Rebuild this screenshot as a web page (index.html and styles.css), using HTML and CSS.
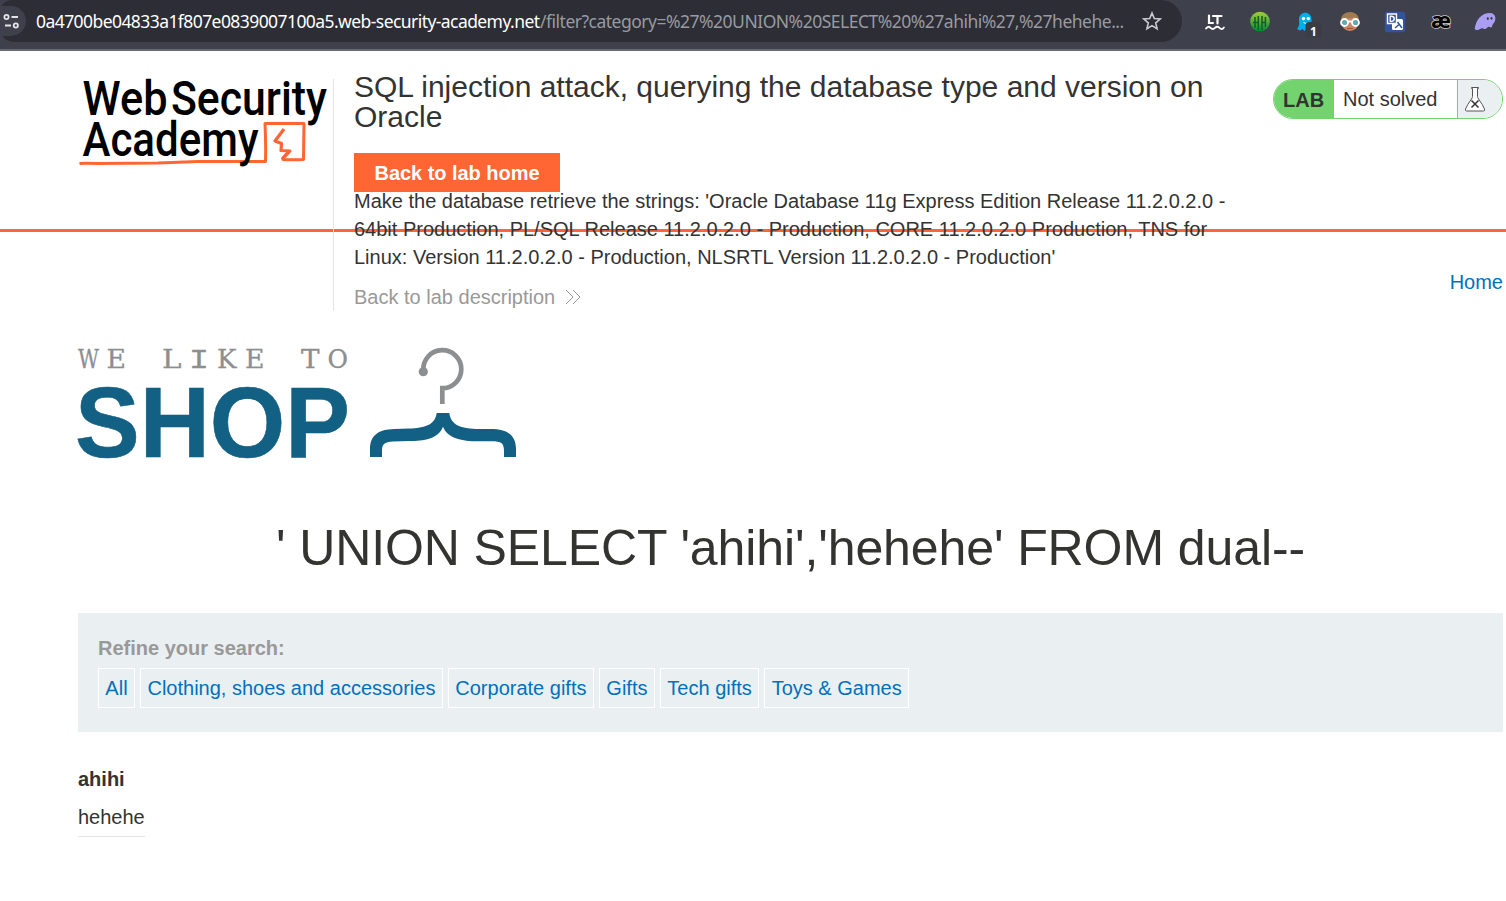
FILE: index.html
```html
<!DOCTYPE html>
<html lang="en">
<head>
<meta charset="utf-8">
<title>SQL injection attack, querying the database type and version on Oracle</title>
<link rel="stylesheet" href="styles.css">
</head>
<body>
<div class="browser-bar">
  <div class="address">
    <span class="site-info">
      <svg width="26" height="30" viewBox="0 0 26 30" fill="none" stroke="#e3e3e8" stroke-width="1.8"><circle cx="6.500" cy="11" r="2.100"/><path d="M11.500 11h6.500M5 19.500h6"/><circle cx="15.800" cy="19.500" r="2.100"/></svg>
    </span>
    <span class="url"><span class="host">0a4700be04833a1f807e0839007100a5.web-security-academy.net</span><span class="path">/filter?category=%27%20UNION%20SELECT%20%27ahihi%27,%27hehehe...</span></span>
    <svg class="star" width="20" height="20" viewBox="0 0 20 20" fill="none" stroke="#c9cad0" stroke-width="1.600"><path d="M10 2l2.300 5.500 5.900.5-4.500 3.900 1.400 5.800L10 14.600l-5.100 3.100 1.400-5.800L1.800 8l5.900-.5z"/></svg>
  </div>
  <div class="extensions">
    <svg width="22" height="22" viewBox="0 0 22 22" fill="none" stroke="#fff" stroke-width="2.200" stroke-linecap="round"><path d="M5 4.500v7.500h4M9 5h8.500M13.500 5v7.500"/><path d="M2 17.500c1.800-2.200 2.800-2.200 4.500-.6s2.700 1.700 4.500 0 2.800-1.700 4.500 0 2.800 1.700 4.400-.4" stroke-width="1.800"/></svg>
    <svg width="22" height="22" viewBox="0 0 22 22"><defs><linearGradient id="g" x2="0" y2="1"><stop stop-color="#a5cf3a"/><stop offset="1" stop-color="#008c35"/></linearGradient></defs><circle cx="11" cy="10.500" r="9.800" fill="url(#g)"/><path d="M6 6v11M9.300 5v14M13 5v14M16.400 6v10M4 11.500h5M13 11.500h3.500" stroke="#175b2d" stroke-width="1.500"/></svg>
    <svg width="28" height="28" viewBox="0 0 28 28"><path d="M3 18c3-3 2-7 2-9.500C5-.5 17.500-.5 17.500 8.500V18l-2.500 2-2-2-2.500 2-2-2-2.500 1.500z" fill="#00aef0"/><circle cx="9.500" cy="7.500" r="1.700" fill="#fff"/><circle cx="14.300" cy="7.500" r="1.700" fill="#fff"/><path d="M9.500 11.500q2.500 2 5 0" stroke="#fff" fill="none"/><rect x="11.500" y="11" width="16" height="16" rx="3.500" fill="#3b3d45"/><text x="19.500" y="24.500" text-anchor="middle" class="badge">1</text></svg>
    <svg width="22" height="22" viewBox="0 0 22 22"><circle cx="11" cy="11" r="9" fill="#c98562"/><path d="M2 10C1-2 21-2 20 10l-4-4q-7 2-10 1z" fill="#a07a50"/><circle cx="5.500" cy="11.500" r="3.500" fill="#63a9b4" stroke="#fff" stroke-width="1.800"/><circle cx="16.500" cy="11.500" r="3.500" fill="#63a9b4" stroke="#fff" stroke-width="1.800"/><path d="M9 10.500h4" stroke="#fff" stroke-width="2"/><path d="M8 17.500h6" stroke="#a44e43"/></svg>
    <svg width="22" height="22" viewBox="0 0 22 22"><rect x=".8" y=".8" width="20.400" height="20.400" rx="2.500" fill="#33539c"/><path d="M10 8h7.500q1.500 0 1.500 1.500v8q0 1.500-1.500 1.500H9.500q-1.500 0-1.500-1.500V8z" fill="#fff"/><path d="M3.500 3h9v9.500h-9z" fill="#33539c" stroke="#fff" stroke-width="1.400"/><path d="M6.200 5.200h1q3 0 3 2.600t-3 2.600h-1z" stroke="#fff" stroke-width="1.400" fill="none"/><path d="M13.500 11l4.500 6M15 13.500l-4 3.500" stroke="#33539c" stroke-width="1.500"/></svg>
    <svg class="ae-icon" width="24" height="22" viewBox="0 0 24 22"><text x="2" y="16.500" textLength="20" lengthAdjust="spacingAndGlyphs" class="ae">æ</text></svg>
    <svg width="24" height="22" viewBox="0 0 24 22"><path d="M.7 18C2 8 8 2 16 2c6 0 7 7 3 11-1 1-.5 3-2 3.500-1.500 0-2-1-3-.5s-1.500 2-3 2-1.500-1-3-.8C5 18 2.500 20.500.7 18z" fill="#ab9df2"/><ellipse cx="13.800" cy="7.500" rx="1" ry="1.500" fill="#3e404c"/><ellipse cx="17.500" cy="7.200" rx="1" ry="1.500" fill="#3e404c"/></svg>
  </div>
</div>

<header class="lab-header">
  <svg class="academy-logo" width="255" height="95" viewBox="0 0 255 95">
    <text class="academy-text" x="4.500" y="42" textLength="85" lengthAdjust="spacingAndGlyphs">Web</text>
    <text class="academy-text" x="93" y="42" textLength="156" lengthAdjust="spacingAndGlyphs">Security</text>
    <path d="M1.500 90.500Q5 90 20 90.500L80 90 120 88.500 187.500 88.500Q188 70 187 50.500L226 50.500 225.500 86.500Q215 87 205 86.500V85L211.500 77.500" fill="none" stroke="#ff6633" stroke-width="3" stroke-linejoin="round"/>
    <path d="M206 56l-9 12 6.500 2.500-.5 7 9 .5-8 8.500" fill="none" stroke="#ff6633" stroke-width="3.200" stroke-linejoin="round"/>
    <text class="academy-text" x="4.500" y="83" textLength="176" lengthAdjust="spacingAndGlyphs">Academy</text>
  </svg>
  <div class="lab-title">
    <h2>SQL injection attack, querying the database type and version on Oracle</h2>
    <a class="home-button">Back to lab home</a>
    <p>Make the database retrieve the strings: 'Oracle Database 11g Express Edition Release 11.2.0.2.0 - 64bit Production, PL/SQL Release 11.2.0.2.0 - Production, CORE 11.2.0.2.0 Production, TNS for Linux: Version 11.2.0.2.0 - Production, NLSRTL Version 11.2.0.2.0 - Production'</p>
    <a class="description-link">Back to lab description <svg width="17" height="16" viewBox="0 0 17 16" fill="none" stroke="#999" stroke-width="1"><path d="M1 1l7 7-7 7M8 1l7 7-7 7"/></svg></a>
  </div>
  <div class="lab-status">
    <span class="lab-label">LAB</span><span class="lab-state">Not solved</span>
    <span class="lab-flask"><svg width="22" height="26" viewBox="0 0 22 26" fill="#fff" stroke="#555" stroke-width="1"><path d="M7.500 1.500h7v1h-1v8q0 1 1 2.500 4.500 6 6 10 .5 2-1 2H2.500q-1.500 0-1-2 1.500-4 6-10 1-1.500 1-2.500v-8h-1z"/><path d="M7.500 14.500l7 7M14.500 14.500l-7 7" stroke="#333" stroke-width="1.500"/></svg></span>
  </div>
</header>

<main>
  <nav><a>Home</a></nav>
  <svg class="shop-logo" width="440" height="120" viewBox="0 0 440 120">
    <g class="like">
      <text x="0" y="23.300" textLength="21" lengthAdjust="spacingAndGlyphs">W</text><text x="28.500" y="23.300" textLength="19.500" lengthAdjust="spacingAndGlyphs">E</text>
      <text x="84" y="23.300" textLength="19.500" lengthAdjust="spacingAndGlyphs">L</text><text class="mono" x="111" y="23.300" textLength="20" lengthAdjust="spacingAndGlyphs">I</text><text x="139" y="23.300" textLength="19.500" lengthAdjust="spacingAndGlyphs">K</text><text x="167" y="23.300" textLength="19.500" lengthAdjust="spacingAndGlyphs">E</text>
      <text x="223" y="23.300" textLength="18.500" lengthAdjust="spacingAndGlyphs">T</text><text x="249.500" y="23.300" textLength="20.500" lengthAdjust="spacingAndGlyphs">O</text>
    </g>
    <text class="shop" x="-3" y="112.300" textLength="275" lengthAdjust="spacingAndGlyphs">SHOP</text>
    <path d="M345.300 25A19 19 0 1 1 364.300 43.200V59" fill="none" stroke="#8d8e8f" stroke-width="4.700"/><circle cx="345.300" cy="26.700" r="4.600" fill="#8d8e8f"/>
    <path d="M292 112v-8C292 90 301 84.500 316 84L331 83.500C347 83 357 80 358.700 68H371.300C373 80 382 83 398 84H413C429 84 438 90 438 104v8H426v-6C426 98 423 96.300 414 96.300H399C385 96 370 94 365 81.700 360 94 346 96 331 96L315 96.500C306 97 304 99 304 106.500v5.500z" fill="#126083"/>
  </svg>
  <h1>' UNION SELECT 'ahihi','hehehe' FROM dual--</h1>
  <section class="filters">
    <label>Refine your search:</label>
    <div class="categories"><a>All</a><a>Clothing, shoes and accessories</a><a>Corporate gifts</a><a>Gifts</a><a>Tech gifts</a><a>Toys &amp; Games</a></div>
  </section>
  <table><tbody><tr><th>ahihi</th></tr><tr><td>hehehe</td></tr></tbody></table>
</main>
</body>
</html>
```
FILE: styles.css
```css
* { box-sizing: border-box; }
body { margin: 0; background: #fff; color: #333332; font: 20px/28px "Liberation Sans", Arial, sans-serif; height: 901px; overflow: hidden; }
.browser-bar { display: flex; height: 51px; background: #3e404c; border-bottom: 2px solid #696b74; }
.address { display: flex; align-items: center; width: 1182px; height: 42px; background: #2c2d35; border-radius: 12px 21px 21px 14px; flex: none; }
.site-info { display: flex; width: 26px; height: 30px; background: #3e404c; border-radius: 0 15px 15px 0; }
.url { margin-left: 10px; width: 1106px; font: 17.500px/26px "Noto Sans", sans-serif; white-space: nowrap; flex: none; display: flex; }
.host { color: #fff; letter-spacing: -.57px; width: 504px; }
.path { color: #999aa1; letter-spacing: -.5px; }
.star { flex: none; }
.extensions { display: flex; align-items: flex-start; padding: 11px 0 0 22px; gap: 23px; }
.extensions svg { flex: none; }
.extensions svg:nth-child(3) { margin-right: -6px; }
.extensions svg:nth-child(6) { margin-right: -2px; }
.ae-icon { overflow: visible; }
.badge { font: bold 12px "Noto Sans", sans-serif; fill: #fff; }
.ae { font: bold 22px "Noto Sans", sans-serif; fill: #000; stroke: #ccc; stroke-width: 1.6px; paint-order: stroke; }

.lab-header { display: flex; align-items: flex-start; height: 181px; padding: 28px 3px 0 78px; border-bottom: 3px solid #f63; }
.academy-logo { flex: none; margin-top: -6px; overflow: visible; }
.academy-text { font: 500 48px Roboto, sans-serif; fill: #000; }
.lab-title { width: 900px; height: 232px; padding-left: 20px; border-left: 1px solid #e4e4e4; flex: none; }
h2 { margin: -7px 0 0; width: 870px; font-size: 30px; line-height: 30px; font-weight: 400; }
.home-button { display: flex; align-items: center; justify-content: center; margin-top: 21px; width: 206px; height: 39px; background: #f63; color: #fff; font-weight: 700; letter-spacing: -.04px; }
.lab-title p { margin: -5px 0 12px; width: 875px; }
.description-link { display: flex; align-items: center; gap: 10px; color: #999; }
.lab-status { display: flex; width: 230px; height: 40px; margin-left: auto; border: 1px solid #72d36f; border-radius: 20px; overflow: hidden; }
.lab-label { width: 60px; padding: 6px 0 0 9px; background: #72d36f; font-weight: 700; }
.lab-state { width: 123px; padding: 5px 0 0 9px; }
.lab-flask { flex: 1; padding: 6px; background: #eaeff2; border-left: 1px solid #72d36f; }

main { padding: 36px 3px 0 78px; }
nav { text-align: right; }
a { color: #0071bc; }
.shop-logo { display: block; margin-top: 49px; overflow: visible; }
.like text { font: 26px "DejaVu Serif", serif; fill: #8d8e8f; stroke: #8d8e8f; stroke-width: .3px; }
.like .mono { font: 28px "Liberation Mono", monospace; }
.shop { font: bold 101px "Liberation Sans", sans-serif; fill: #126083; stroke: #126083; stroke-width: .6px; }
h1 { margin: 52px 0 34px; font-size: 50px; line-height: 62px; font-weight: 400; text-align: center; letter-spacing: -.1px; }
.filters { height: 119px; padding: 21px 20px; background: #eaeff2; }
label { display: block; color: #999; font-weight: 700; }
.categories { display: flex; gap: 5.200px; margin-top: 6px; }
.categories a { height: 40px; padding: 5px 6.350px; border: 1px solid #fff; white-space: nowrap; }
table { margin-top: 28px; border-collapse: collapse; }
th, td { padding: 5px 0; text-align: left; }
td { border-bottom: 1px solid #e4e4e4; }
```
